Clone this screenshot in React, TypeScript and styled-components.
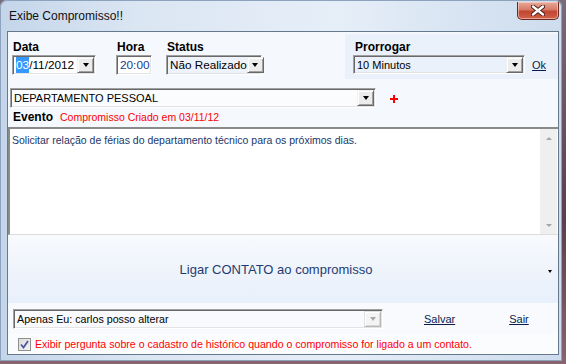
import React from 'react';
import styled, { createGlobalStyle } from 'styled-components';

const GlobalStyle = createGlobalStyle`
  html, body {
    margin: 0;
    padding: 0;
  }
  body {
    width: 566px;
    height: 364px;
    overflow: hidden;
    background: linear-gradient(180deg, #7b6a78 0%, #5a3f4e 60%, #8a6470 100%);
    font-family: "Liberation Sans", Arial, sans-serif;
  }
`;

const Screen = styled.div`
  width: 566px;
  height: 364px;
  display: flex;
  align-items: flex-start;
`;

const Window = styled.div`
  box-sizing: border-box;
  width: 562px;
  height: 361px;
  display: flex;
  flex-direction: column;
  padding: 0 3px 6px 7px;
  border-radius: 7px 7px 0 0;
  background: linear-gradient(90deg, #c4d5ea 0%, #dbe6f3 25%, #e6eef8 60%, #cddcee 100%);
  box-shadow: inset 0 0 0 1px #8da2bc;
`;

const TitleBar = styled.div`
  height: 31px;
  display: flex;
  align-items: flex-start;
`;

const Title = styled.div`
  margin: 9px 0 0 2px;
  font-size: 12px;
  line-height: 14px;
  color: #111;
`;

const CloseButton = styled.div`
  box-sizing: border-box;
  width: 42px;
  height: 18px;
  margin: 2px 0 0 auto;
  border: 1px solid #6d2a22;
  border-top: none;
  border-radius: 0 0 5px 5px;
  background: linear-gradient(180deg, #e6aa9c 0%, #d67a66 45%, #c24631 55%, #d1624a 100%);
  box-shadow: inset 0 0 0 1px rgba(255, 220, 210, 0.55);
  display: flex;
  align-items: center;
  justify-content: center;
`;

const Client = styled.div`
  box-sizing: border-box;
  flex: 1;
  display: flex;
  flex-direction: column;
  border: 1px solid #66788c;
  background: #f5f8fc;
`;

const TopSection = styled.div`
  height: 49px;
  display: flex;
  align-items: flex-start;
`;

const Field = styled.div<{ $width?: number; $left?: number }>`
  display: flex;
  flex-direction: column;
  width: ${p => (p.$width ? `${p.$width}px` : 'auto')};
  margin-left: ${p => p.$left ?? 0}px;
  padding-top: 8px;
`;

const Label = styled.div<{ $indent?: number }>`
  font-size: 12px;
  font-weight: bold;
  line-height: 15px;
  color: #000;
  padding-left: ${p => p.$indent ?? 1}px;
`;

const ProrrogarPanel = styled.div`
  box-sizing: border-box;
  width: 213px;
  height: 45px;
  margin: 2px 0 0 auto;
  padding: 6px 0 0 8px;
  background: #ebf1fa;
`;

const PanelRow = styled.div`
  display: flex;
  align-items: center;
  gap: 7px;
`;

const Combo = styled.div<{ $width: number; $bg?: string; $height?: number }>`
  box-sizing: border-box;
  width: ${p => p.$width}px;
  height: ${p => p.$height ?? 20}px;
  display: flex;
  align-items: center;
  padding: 0 1px 0 3px;
  background: ${p => p.$bg ?? '#fff'};
  border: 1px solid;
  border-color: #a0a0a0 #fff #fff #a0a0a0;
  box-shadow: inset 1px 1px 0 #696969, inset -1px -1px 0 #e3e3e3;
  color: #000;
  white-space: nowrap;
`;

const ComboText = styled.span<{ $color?: string; $size?: number }>`
  flex: 1;
  font-size: ${p => p.$size ?? 11}px;
  line-height: 16px;
  color: ${p => p.$color ?? '#000'};
`;

const Selected = styled.span`
  display: inline-block;
  background: #3399ff;
  color: #fff;
`;

const DropButton = styled.div<{ $disabled?: boolean }>`
  box-sizing: border-box;
  width: 17px;
  height: 16px;
  flex-shrink: 0;
  background: ${p => (p.$disabled ? '#f4f4f4' : '#ececec')};
  border: 1px solid;
  border-color: ${p => (p.$disabled ? '#e0e0e0 #b8b8b8 #b8b8b8 #e0e0e0' : '#f0f0f0 #696969 #696969 #f0f0f0')};
  box-shadow: inset 1px 1px 0 #fff, inset -1px -1px 0 ${p => (p.$disabled ? '#d8d8d8' : '#a0a0a0')};
  display: flex;
  align-items: center;
  justify-content: center;

  &::after {
    content: '';
    border-left: 3.5px solid transparent;
    border-right: 3.5px solid transparent;
    border-top: 4px solid ${p => (p.$disabled ? '#a8a8a8' : '#000')};
  }
`;

const Link = styled.span<{ $left?: number }>`
  margin-left: ${p => p.$left ?? 0}px;
  font-size: 11px;
  color: #0b1d4d;
  text-decoration: underline;
`;

const DeptRow = styled.div`
  display: flex;
  align-items: center;
  margin: 7px 0 0 2px;
`;

const PlusIcon = styled.svg`
  margin-left: 14px;
  margin-top: 1px;
`;

const EventoRow = styled.div`
  display: flex;
  align-items: baseline;
  gap: 7px;
  margin: 2px 0 0 4px;
  height: 17px;
`;

const CreatedText = styled.span`
  font-size: 10.5px;
  color: #ff0000;
`;

const Memo = styled.div`
  box-sizing: border-box;
  height: 108px;
  display: flex;
  background: #fff;
  border-top: 2px solid #8a8a8a;
  border-left: 2px solid #8a8a8a;
  border-bottom: 1px solid #dcdcdc;
`;

const MemoText = styled.div`
  flex: 1;
  padding: 4px 0 0 2px;
  font-size: 10.5px;
  line-height: 14px;
  color: #1a3668;
`;

const ScrollBar = styled.div`
  width: 17px;
  margin-right: 1px;
  background: #efefef;
  display: flex;
  flex-direction: column;
  justify-content: space-between;
  align-items: center;
  padding: 8px 0 7px;
`;

const ScrollArrow = styled.div<{ $up?: boolean }>`
  border-left: 3.5px solid transparent;
  border-right: 3.5px solid transparent;
  ${p => (p.$up ? 'border-bottom' : 'border-top')}: 3px solid #a6a6a6;
`;

const ContactSection = styled.div`
  height: 68px;
  display: flex;
  align-items: center;
  padding-right: 6px;
  background: linear-gradient(180deg, #f8fafd 0%, #eef3fb 55%, #e8f0fb 100%);
`;

const ContactText = styled.div`
  flex: 1;
  text-align: center;
  padding-right: 4px;
  font-size: 13px;
  color: #1e3c72;
`;

const SmallArrow = styled.div`
  margin-top: 4px;
  border-left: 2.5px solid transparent;
  border-right: 2.5px solid transparent;
  border-top: 3px solid #000;
`;

const BottomSection = styled.div`
  flex: 1;
  display: flex;
  flex-direction: column;
  background: #f8fafd;
`;

const OwnerRow = styled.div`
  display: flex;
  align-items: center;
  margin: 6px 0 0 5px;
  height: 20px;
`;

const CheckRow = styled.div`
  flex: 1;
  display: flex;
  align-items: center;
  gap: 4px;
  margin-top: 5px;
  padding-left: 10px;
  background: #fbfcfe;
`;

const CheckBox = styled.div`
  box-sizing: border-box;
  width: 13px;
  height: 13px;
  border: 1px solid #8f8f8f;
  background: linear-gradient(135deg, #dcdcdc, #f4f4f4);
  display: flex;
  align-items: center;
  justify-content: center;
`;

const CheckText = styled.span`
  font-size: 10.6px;
  color: #ff0000;
`;

export default function App() {
  return (
    <>
      <GlobalStyle />
      <Screen>
        <Window>
          <TitleBar>
            <Title>Exibe Compromisso!!</Title>
            <CloseButton>
              <svg width="14" height="11" viewBox="0 0 14 11">
                <path d="M2 1.5 L12 9.5 M12 1.5 L2 9.5" stroke="#4a1a14" strokeWidth="4.2" strokeLinecap="round" />
                <path d="M2 1.5 L12 9.5 M12 1.5 L2 9.5" stroke="#fff" strokeWidth="2.4" strokeLinecap="round" />
              </svg>
            </CloseButton>
          </TitleBar>
          <Client>
            <TopSection>
              <Field $width={104} $left={4}>
                <Label>Data</Label>
                <Combo $width={84}>
                  <ComboText $size={11.8}>
                    <Selected>03</Selected>/11/2012
                  </ComboText>
                  <DropButton />
                </Combo>
              </Field>
              <Field $width={50}>
                <Label>Hora</Label>
                <Combo $width={36}>
                  <ComboText $color="#173c8c" $size={11.8}>20:00</ComboText>
                </Combo>
              </Field>
              <Field>
                <Label>Status</Label>
                <Combo $width={96} $bg="#eef3fb">
                  <ComboText $size={11.7}>Não Realizado</ComboText>
                  <DropButton />
                </Combo>
              </Field>
              <ProrrogarPanel>
                <Label $indent={2}>Prorrogar</Label>
                <PanelRow>
                  <Combo $width={172} $height={19} $bg="#eaf1fb">
                    <ComboText>10 Minutos</ComboText>
                    <DropButton />
                  </Combo>
                  <Link>Ok</Link>
                </PanelRow>
              </ProrrogarPanel>
            </TopSection>

            <DeptRow>
              <Combo $width={366} $bg="#fbfcfe">
                <ComboText>DEPARTAMENTO PESSOAL</ComboText>
                <DropButton />
              </Combo>
              <PlusIcon width="8" height="8" viewBox="0 0 8 8">
                <path d="M4 0 V8 M0 4 H8" stroke="#ff0000" strokeWidth="2" />
              </PlusIcon>
            </DeptRow>

            <EventoRow>
              <Label>Evento</Label>
              <CreatedText>Compromisso Criado em 03/11/12</CreatedText>
            </EventoRow>

            <Memo>
              <MemoText>Solicitar relação de férias do departamento técnico para os próximos dias.</MemoText>
              <ScrollBar>
                <ScrollArrow $up />
                <ScrollArrow />
              </ScrollBar>
            </Memo>

            <ContactSection>
              <ContactText>Ligar CONTATO ao compromisso</ContactText>
              <SmallArrow />
            </ContactSection>

            <BottomSection>
              <OwnerRow>
                <Combo $width={370} $bg="#f8fafd">
                  <ComboText $size={10.7}>Apenas Eu: carlos posso alterar</ComboText>
                  <DropButton $disabled />
                </Combo>
                <Link $left={41}>Salvar</Link>
                <Link $left={54}>Sair</Link>
              </OwnerRow>
              <CheckRow>
                <CheckBox>
                  <svg width="9" height="9" viewBox="0 0 9 9">
                    <path d="M1 4.5 L3.5 7.5 L8 1" fill="none" stroke="#4b5a9c" strokeWidth="1.8" />
                  </svg>
                </CheckBox>
                <CheckText>
                  Exibir pergunta sobre o cadastro de histórico quando o compromisso for ligado a um contato.
                </CheckText>
              </CheckRow>
            </BottomSection>
          </Client>
        </Window>
      </Screen>
    </>
  );
}
